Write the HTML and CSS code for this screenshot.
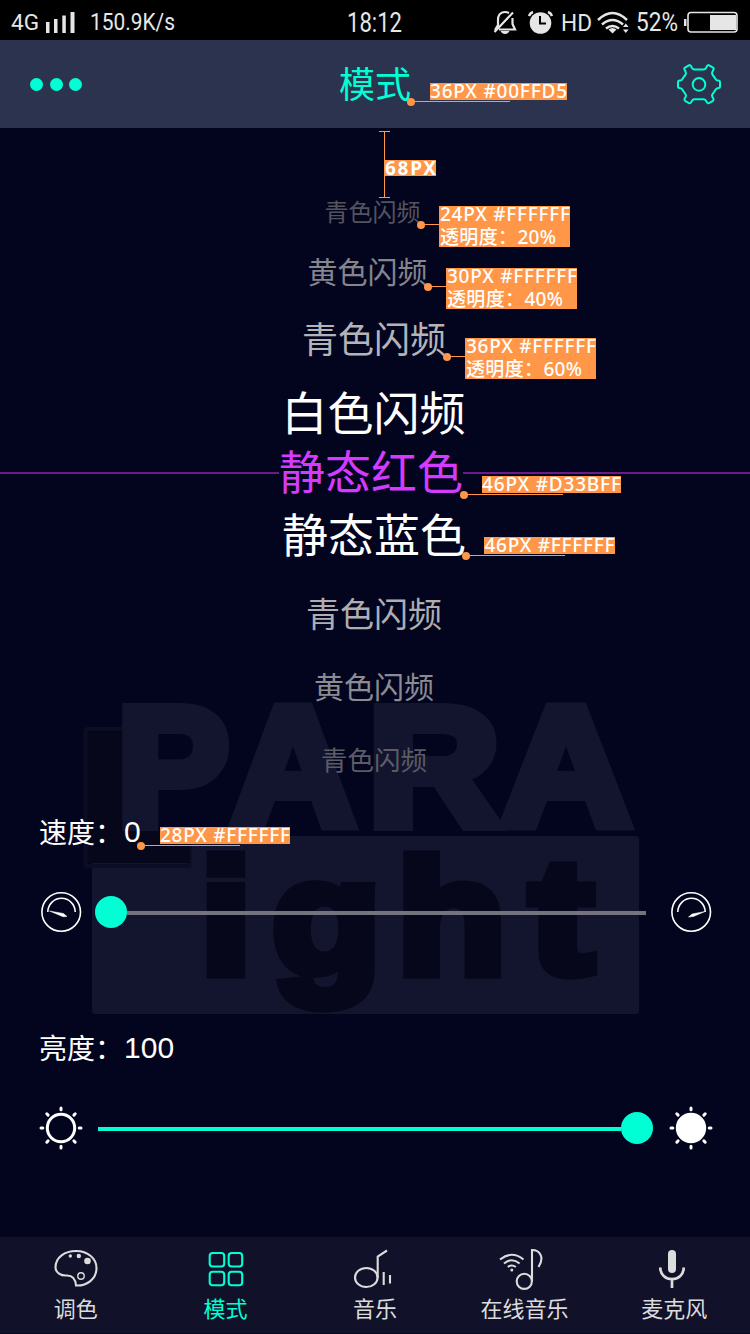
FILE: index.html
```html
<!DOCTYPE html>
<html lang="zh-CN">
<head>
<meta charset="utf-8">
<title>模式</title>
<link rel="stylesheet" href="styles.css">
</head>
<body>
<div class="screen">
  <svg class="watermark" viewBox="0 0 750 1334" aria-hidden="true">
    <rect x="92" y="836" width="547" height="178" rx="3" class="wm-light"/>
    <rect x="85.500" y="729" width="104" height="137" rx="2" class="wm-edge"/>
    <rect x="162" y="720" width="40" height="111" class="wm-back"/>
    <rect x="88" y="732" width="36" height="131" class="wm-dark"/>
    <rect x="88" y="831" width="102" height="32" class="wm-dark"/>
    <g class="wm-para">
      <text x="117" y="825" textLength="112" lengthAdjust="spacingAndGlyphs">P</text>
      <text x="231" y="825" textLength="124" lengthAdjust="spacingAndGlyphs">A</text>
      <text x="368" y="825" textLength="132" lengthAdjust="spacingAndGlyphs">R</text>
      <text x="501" y="825" textLength="130" lengthAdjust="spacingAndGlyphs">A</text>
    </g>
    <g class="wm-ight">
      <text x="200" y="973" textLength="52" lengthAdjust="spacingAndGlyphs">i</text>
      <text x="272" y="973" textLength="109" lengthAdjust="spacingAndGlyphs">g</text>
      <text x="397" y="973" textLength="109" lengthAdjust="spacingAndGlyphs">h</text>
      <text x="530" y="973" textLength="63" lengthAdjust="spacingAndGlyphs">t</text>
    </g>
  </svg>

  <svg class="status" viewBox="0 0 750 40">
    <g class="status-text">
      <text x="11" y="30" font-size="22" textLength="28" lengthAdjust="spacingAndGlyphs">4G</text>
      <text x="90" y="30" font-size="24" textLength="85" lengthAdjust="spacingAndGlyphs">150.9K/s</text>
      <text x="347" y="32" font-size="28" textLength="55" lengthAdjust="spacingAndGlyphs">18:12</text>
      <text x="561" y="31" font-size="24" textLength="31" lengthAdjust="spacingAndGlyphs">HD</text>
      <text x="636" y="31" font-size="25" textLength="42" lengthAdjust="spacingAndGlyphs">52%</text>
    </g>
    <g fill="#e6e6e6">
      <rect x="46" y="22" width="3.500" height="11"/><rect x="54" y="19" width="3.500" height="14"/>
      <rect x="62.300" y="15.500" width="3.500" height="17.500"/><rect x="70.500" y="12" width="4" height="21"/>
      <path d="M500.500 31h9q-1.500 3-4.500 3t-4.500-3z"/>
      <circle cx="540.500" cy="23" r="10.800"/>
      <path d="M608.500 29.500q4-3 8 0l-4 4z"/>
      <path d="M623 27l2.800-3.500 2.800 3.500zM623 29.500h5.600l-2.800 3.500zM710 15h26v15h-26zM684 19h2.500v7h-2.500z"/>
    </g>
    <g fill="none" stroke="#e6e6e6" stroke-width="2.200">
      <path d="M513 12.500L494.500 32M509 13q-2-1-4-1c-5 0-7 4-7 8v5l-3 5M512.500 18v6l2.500 5.500h-16"/>
      <path d="M529 16q1-3 4-4M552 16q-1-3-4-4" stroke-width="2.500"/>
      <path d="M598 20Q612.500 6 627 20M602 24.500q10.500-9 21 0M606 28.500q6.500-5 13 0" stroke-width="2.500"/>
      <rect x="688" y="12.500" width="49" height="19.500" rx="3" stroke-width="1.600"/>
    </g>
    <path d="M540 16v7.500h6" fill="none" stroke="#000" stroke-width="2"/>
  </svg>

  <header class="header">
    <div class="more"><i></i><i></i><i></i></div>
    <h1 class="title">模式</h1>
    <svg class="gear" viewBox="676 61 46 46">
      <path d="M688.800 65.400Q690 64.500 691 66L692 68Q692.800 69.500 694.500 69.500H703.500Q705.200 69.500 706 68L707 66Q708 64.500 709.200 65.400L713 67.700Q714.200 68.500 713.300 70L712.300 72Q711.600 73.300 712.500 74.600L716 79.600Q717 80.700 718.500 80.600Q720 80.800 720 82V86.800Q720 88 718.500 88Q717 88 716 89.200L712.500 94.200Q711.600 95.300 712.300 96.700L713.300 98.500Q714 100 713 100.800L709.200 103Q708 103.900 707 102.500L706 100.800Q705.200 99.200 703.500 99.200H694.500Q692.800 99.200 692 100.800L691 102.500Q690 103.900 688.800 103L685 100.800Q684 100 684.700 98.500L685.700 96.700Q686.400 95.300 685.500 94.200L682 89.200Q681 88 679.500 88Q678 88 678 86.800V82Q678 80.800 679.500 80.600Q681 80.700 682 79.600L685.500 74.600Q686.400 73.300 685.700 72L684.700 70Q683.800 68.500 685 67.700Z"/>
      <circle cx="699" cy="84.400" r="6.300"/>
    </svg>
  </header>

  <ul class="wheel">
    <li class="w1">青色闪频</li>
    <li class="w2">黄色闪频</li>
    <li class="w3">青色闪频</li>
    <li class="w4">白色闪频</li>
    <li class="w5"><i class="rule rule-left"></i><span>静态红色</span><i class="rule"></i></li>
    <li class="w6">静态蓝色</li>
    <li class="w7">青色闪频</li>
    <li class="w8">黄色闪频</li>
    <li class="w9">青色闪频</li>
  </ul>

  <section class="control">
    <div class="label"><span>速度：</span><b>0</b></div>
    <div class="slider">
      <svg class="gauge" viewBox="40 891 42 42">
        <circle cx="61.200" cy="912" r="19.300"/><path d="M47.800 912a13.700 13.700 0 0 1 27.400 0"/>
        <path class="needle" d="M49.500 911l14 2.500 3.500 3-4 .2z"/>
      </svg>
      <div class="track speed"><i class="knob"></i><i class="bar"></i></div>
      <svg class="gauge" viewBox="670 891 42 42">
        <circle cx="691.200" cy="912" r="19.300"/><path d="M677.800 912a13.700 13.700 0 0 1 27.400 0"/>
        <path class="needle" d="M705 911.500l-13 2.500-3.500 3 5-.5z"/>
      </svg>
    </div>
  </section>

  <section class="control">
    <div class="label"><span>亮度：</span><b>100</b></div>
    <div class="slider">
      <svg class="sun" viewBox="-22 -22 44 44">
        <circle r="13.700"/>
        <path d="M0-18.200V-20M0 18.200V20M-18.200 0H-20M18.200 0H20M12.900-12.900l1.300-1.300M-12.900-12.900l-1.300-1.300M12.900 12.900l1.300 1.300M-12.900 12.900l-1.300 1.300"/>
      </svg>
      <div class="track light"><i class="bar"></i><i class="knob"></i></div>
      <svg class="sun full" viewBox="-22 -22 44 44">
        <circle r="13.700"/>
        <path d="M0-18.200V-20M0 18.200V20M-18.200 0H-20M18.200 0H20M12.900-12.900l1.300-1.300M-12.900-12.900l-1.300-1.300M12.900 12.900l1.300 1.300M-12.900 12.900l-1.300 1.300"/>
      </svg>
    </div>
  </section>

  <nav class="tabs">
    <a class="tab"><svg viewBox="51 1244 50 48">
      <path d="M76 1285.500C75.500 1279 72 1275.500 67 1275.500C61 1276 55.500 1272.500 55.500 1267.500C55.500 1257 65 1251 76 1251C88 1251 96.500 1258.500 96.500 1268C96.500 1279 87 1286 76 1285.500Z"/>
      <circle cx="81" cy="1276" r="3.200" stroke-width="1.400"/>
      <g class="solid"><circle cx="70.300" cy="1256" r="1.700"/><circle cx="78.800" cy="1256" r="2.200"/><circle cx="87.500" cy="1261" r="3.300"/></g>
    </svg>调色</a>
    <a class="tab active"><svg viewBox="200 1244 50 48">
      <rect x="209.700" y="1253" width="14.500" height="13.500" rx="3"/><rect x="228.700" y="1253" width="13.500" height="13.500" rx="3"/>
      <rect x="209.700" y="1271.800" width="14.500" height="13.500" rx="3"/><rect x="228.700" y="1271.800" width="13.500" height="13.500" rx="3"/>
    </svg>模式</a>
    <a class="tab"><svg viewBox="350 1244 50 48">
      <ellipse cx="366.300" cy="1277.500" rx="11.300" ry="9.500"/>
      <path d="M377.700 1278V1256.500L387 1250.500M383.700 1272v13M390 1275v8.500"/>
    </svg>音乐</a>
    <a class="tab"><svg viewBox="499.500 1244 50 48">
      <path d="M499.500 1259.500Q511.300 1250 523 1259.500M503.500 1263.500q7.800-6.500 15.600 0M507.300 1267q4-3 8 0"/>
      <circle class="solid" cx="511.300" cy="1270" r="1.500"/>
      <circle cx="523.800" cy="1281.300" r="7.600"/>
      <path d="M531.500 1281V1250C540 1250 544 1258 538 1267"/>
    </svg>在线音乐</a>
    <a class="tab"><svg viewBox="649 1244 50 48">
      <rect class="solid" x="668" y="1250" width="8" height="23" rx="4"/>
      <path d="M660.300 1267.500C660.300 1283 683.700 1283 683.700 1267.500M672 1279v9" stroke-width="2.700"/>
    </svg>麦克风</a>
  </nav>

  <svg class="notes" viewBox="0 0 750 1334">
    <g fill="none" stroke="#ff9648" stroke-width="1">
      <path d="M410 101.500H510M379 131.500H390M384.500 131V197M379 197.500H390M420 224.500H440M428 286.500H447M447 356.500H466M464 494.500H563M466 555.500H565M141 845.500H240"/>
    </g>
    <g fill="#ff9648">
      <circle cx="411" cy="102" r="4"/><circle cx="421" cy="225" r="4"/><circle cx="428" cy="287" r="4"/>
      <circle cx="447" cy="357" r="4"/><circle cx="464" cy="495" r="4"/><circle cx="466" cy="556" r="4"/><circle cx="141" cy="846" r="4"/>
      <rect x="430" y="83" width="137" height="17"/><rect x="385" y="160" width="51" height="16"/>
      <rect x="439" y="206" width="131" height="41"/><rect x="446" y="268" width="131" height="41"/>
      <rect x="465" y="338" width="131" height="41"/><rect x="482" y="476" width="139" height="17"/>
      <rect x="484" y="537" width="131" height="17"/><rect x="160" y="827" width="130" height="17"/>
    </g>
    <g class="note-text">
      <text x="430" y="98" textLength="137">36PX #00FFD5</text>
      <text x="385" y="174.500" textLength="51" class="bold">68PX</text>
      <text x="440" y="221" textLength="130">24PX #FFFFFF</text><text x="440" y="243.500" textLength="116">透明度：20%</text>
      <text x="447" y="283" textLength="130">30PX #FFFFFF</text><text x="447" y="305.500" textLength="116">透明度：40%</text>
      <text x="466" y="353" textLength="130">36PX #FFFFFF</text><text x="466" y="375.500" textLength="116">透明度：60%</text>
      <text x="482" y="491" textLength="139">46PX #D33BFF</text>
      <text x="484.500" y="552" textLength="130">46PX #FFFFFF</text>
      <text x="160" y="842" textLength="130">28PX #FFFFFF</text>
    </g>
  </svg>
</div>
</body>
</html>
```
FILE: styles.css
```css
* { box-sizing: border-box; }
body { margin: 0; background: #03041e; }
.screen {
  position: relative;
  width: 750px;
  height: 1334px;
  overflow: hidden;
  display: flex;
  flex-direction: column;
  background: #03041e;
  color: #fff;
  font-family: "Noto Sans CJK SC", sans-serif;
}
.watermark, .notes { position: absolute; inset: 0; width: 750px; height: 1334px; }
.watermark { z-index: 0; }
.notes { z-index: 2; pointer-events: none; }
.wm-light { fill: #13142d; }
.wm-back { fill: #03041e; }
.wm-edge { fill: none; stroke: #0c0d25; stroke-width: 4; }
.wm-dark { fill: #06071b; }
.wm-para text, .wm-ight text { font-family: "Liberation Sans", sans-serif; font-weight: 700; stroke-linejoin: miter; }
.wm-para { fill: #13142d; stroke: #13142d; stroke-width: 12; font-size: 168px; }
.wm-ight { fill: #06071b; stroke: #06071b; stroke-width: 11; font-size: 162px; }

.status { flex: none; width: 750px; height: 40px; background: #000; position: relative; }
.status-text { fill: #e6e6e6; font-family: Roboto, sans-serif; }

.header {
  position: relative;
  flex: none;
  height: 88px;
  background: #2b334f;
  display: grid;
  grid-template-columns: 1fr auto 1fr;
  align-items: center;
  padding: 0 28px 0 30px;
}
.more { display: flex; gap: 6.500px; padding-top: 1px; }
.more i { width: 13px; height: 13px; border-radius: 50%; background: #00ffd5; }
.title { margin: 0; font-size: 36px; line-height: 84px; height: 88px; padding-right: 2px; font-weight: 400; color: #00ffd5; }
.gear { justify-self: end; width: 46px; height: 46px; fill: none; stroke: #00ffd5; stroke-width: 2; }

.wheel { position: relative; z-index: 1; list-style: none; margin: 0; padding: 66px 0 0; height: 660px; flex: none; }
.wheel li { display: flex; align-items: center; justify-content: center; white-space: nowrap; line-height: 1; }
.w1 { height: 34px; font-size: 24px; color: #53545f; padding-right: 5px; }
.w2 { height: 84px; font-size: 30px; color: #85858e; padding-right: 15px; }
.w3 { height: 50px; font-size: 36px; color: #b3b3b8; padding-right: 2px; }
.w4 { height: 96px; font-size: 46px; padding-right: 3px; }
.w5 { height: 30px; font-size: 46px; color: #d33bff; }
.w5 span { transform: translateY(-4px); }
.w6 { height: 87px; font-size: 46px; padding-right: 2px; }
.w7 { height: 75px; font-size: 34px; color: #adadb2; padding-right: 2px; }
.w8 { height: 70px; font-size: 30px; color: #8b8b92; padding-right: 2px; }
.w9 { height: 78px; font-size: 26.500px; color: #5c5c66; padding-right: 2px; }
.rule { flex: 1; height: 2px; background: #6a1c8c; }
.rule-left { flex: 0 0 279px; }

.control { position: relative; z-index: 1; height: 216px; flex: none; padding: 22px 37px 0 39px; }
.label { display: flex; height: 44px; line-height: 42px; font-size: 28px; }
.label b { font: 400 30px/44px "Liberation Sans", sans-serif; margin-left: 1px; }
.slider { display: flex; align-items: center; margin-top: 36px; height: 44px; }
.slider svg { flex: none; width: 44px; height: 44px; }
.gauge { padding: 1px; fill: none; stroke: #fff; stroke-width: 1.600; }
.gauge .needle { fill: #fff; stroke-width: .5; }
.sun { fill: none; stroke: #fff; stroke-width: 3; stroke-linecap: round; }
.full circle { fill: #fff; }
.track { flex: none; display: flex; align-items: center; height: 44px; width: 558px; margin: 0 16px 0 12px; }
.knob { width: 32px; height: 32px; border-radius: 50%; background: #00ffd5; flex: none; }
.bar { height: 4px; flex: 1; margin-top: 2px; background: #74747f; }
.speed { padding-right: 7px; }
.light { padding-left: 3px; }
.light .bar { background: #00ffd5; }

.tabs { position: relative; z-index: 1; margin-top: 17px; flex: none; height: 97px; display: grid; grid-template-columns: repeat(5, 149.600px); padding-left: 1px; background: #111229; border-bottom: 1px solid #080a1e; }
.tab { display: flex; flex-direction: column; align-items: center; padding-top: 7px; font-size: 22px; line-height: 30px; color: #dcdcdc; white-space: nowrap; }
.tab svg { width: 50px; height: 48px; overflow: visible; fill: none; stroke: currentColor; stroke-width: 2.100; }
.tab .solid { fill: currentColor; stroke: none; }
.tab.active { color: #00ffd5; }

.note-text { fill: #fff; font: 500 19px "Noto Sans", "Noto Sans CJK SC", sans-serif; }
.note-text .bold { font-weight: 700; }
```
